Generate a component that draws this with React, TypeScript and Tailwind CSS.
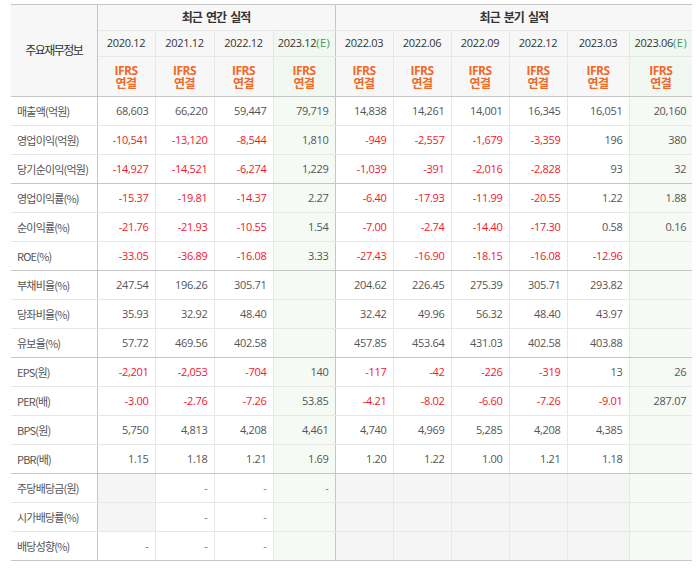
import React from "react";

type Row = { label: string; values: (string | null)[]; groupEnd?: boolean };

const rows: Row[] = [
  { label: "매출액(억원)", values: ["68,603", "66,220", "59,447", "79,719", "14,838", "14,261", "14,001", "16,345", "16,051", "20,160"] },
  { label: "영업이익(억원)", values: ["-10,541", "-13,120", "-8,544", "1,810", "-949", "-2,557", "-1,679", "-3,359", "196", "380"] },
  { label: "당기순이익(억원)", values: ["-14,927", "-14,521", "-6,274", "1,229", "-1,039", "-391", "-2,016", "-2,828", "93", "32"], groupEnd: true },
  { label: "영업이익률(%)", values: ["-15.37", "-19.81", "-14.37", "2.27", "-6.40", "-17.93", "-11.99", "-20.55", "1.22", "1.88"] },
  { label: "순이익률(%)", values: ["-21.76", "-21.93", "-10.55", "1.54", "-7.00", "-2.74", "-14.40", "-17.30", "0.58", "0.16"] },
  { label: "ROE(%)", values: ["-33.05", "-36.89", "-16.08", "3.33", "-27.43", "-16.90", "-18.15", "-16.08", "-12.96", ""], groupEnd: true },
  { label: "부채비율(%)", values: ["247.54", "196.26", "305.71", "", "204.62", "226.45", "275.39", "305.71", "293.82", ""] },
  { label: "당좌비율(%)", values: ["35.93", "32.92", "48.40", "", "32.42", "49.96", "56.32", "48.40", "43.97", ""] },
  { label: "유보율(%)", values: ["57.72", "469.56", "402.58", "", "457.85", "453.64", "431.03", "402.58", "403.88", ""], groupEnd: true },
  { label: "EPS(원)", values: ["-2,201", "-2,053", "-704", "140", "-117", "-42", "-226", "-319", "13", "26"] },
  { label: "PER(배)", values: ["-3.00", "-2.76", "-7.26", "53.85", "-4.21", "-8.02", "-6.60", "-7.26", "-9.01", "287.07"] },
  { label: "BPS(원)", values: ["5,750", "4,813", "4,208", "4,461", "4,740", "4,969", "5,285", "4,208", "4,385", ""] },
  { label: "PBR(배)", values: ["1.15", "1.18", "1.21", "1.69", "1.20", "1.22", "1.00", "1.21", "1.18", ""], groupEnd: true },
  { label: "주당배당금(원)", values: [null, "-", "-", "-", null, null, null, null, null, ""] },
  { label: "시가배당률(%)", values: [null, "-", "-", "", null, null, null, null, null, ""] },
  { label: "배당성향(%)", values: ["-", "-", "-", "", null, null, null, null, null, ""], groupEnd: true },
];

const periods = [
  { p: "2020.12", e: false },
  { p: "2021.12", e: false },
  { p: "2022.12", e: false },
  { p: "2023.12", e: true },
  { p: "2022.03", e: false },
  { p: "2022.06", e: false },
  { p: "2022.09", e: false },
  { p: "2022.12", e: false },
  { p: "2023.03", e: false },
  { p: "2023.06", e: true },
];

const widths = [86, 58, 59, 59, 62, 58, 58, 58, 58, 62, 63];

function rightBorder(i: number) {
  if (i === 3) return "border-r border-r-[#c6c6c6]";
  if (i === 9) return "";
  return "border-r border-r-[#e7e7e7]";
}

export default function App() {
  return (
    <div className="w-[698px] h-[568px] bg-white pt-[4px] pl-[11px]" style={{ fontFamily: '"Open Sans", "Noto Sans CJK KR", sans-serif' }}>
      <table className="table-fixed border-collapse w-[681px] text-[11px]">
        <colgroup>
          {widths.map((w, i) => (
            <col key={i} style={{ width: w }} />
          ))}
        </colgroup>
        <thead>
          <tr className="h-[26px]">
            <th rowSpan={3} className="bg-[#f7f7f7] border-t border-t-[#c6c6c6] border-b border-b-[#c6c6c6] border-r border-r-[#c6c6c6] font-normal text-[#333] text-[12px] tracking-[-1.5px] text-center">
              주요재무정보
            </th>
            <th colSpan={4} className="bg-[#f7f7f7] border-t border-t-[#c6c6c6] border-b border-b-[#e7e7e7] border-r border-r-[#c6c6c6] font-bold text-[#333] text-[12px] tracking-[-1px] [word-spacing:2px] text-center">
              최근 연간 실적
            </th>
            <th colSpan={6} className="bg-[#f7f7f7] border-t border-t-[#c6c6c6] border-b border-b-[#e7e7e7] font-bold text-[#333] text-[12px] tracking-[-1px] [word-spacing:2px] text-center">
              최근 분기 실적
            </th>
          </tr>
          <tr className="h-[26px]">
            {periods.map((c, i) => (
              <th
                key={i}
                className={`${c.e ? "bg-[#f1f7f1]" : "bg-[#f7f7f7]"} border-b border-b-[#e7e7e7] ${rightBorder(i)} font-normal text-[#333] tracking-[-0.3px] text-center whitespace-nowrap`}
              >
                {c.p}
                {c.e && <span className="text-[#3d9a55] tracking-[0.5px]">(E)</span>}
              </th>
            ))}
          </tr>
          <tr className="h-[40px]">
            {periods.map((c, i) => (
              <th
                key={i}
                className={`${c.e ? "bg-[#f1f7f1]" : "bg-[#f7f7f7]"} border-b border-b-[#c6c6c6] ${rightBorder(i)} font-bold text-[#f0692a] text-[12px] leading-[13px] tracking-[-0.5px] text-center whitespace-pre-line`}
              >
                {"IFRS\n연결"}
              </th>
            ))}
          </tr>
        </thead>
        <tbody>
          {rows.map((r, ri) => (
            <tr key={ri} className="h-[29px]">
              <th
                className={`bg-white ${r.groupEnd ? "border-b border-b-[#c6c6c6]" : "border-b border-b-[#e7e7e7]"} border-r border-r-[#c6c6c6] font-normal text-left pl-[6px] text-[#555] text-[11px] tracking-[-0.8px] whitespace-nowrap font-['Noto_Sans_CJK_KR',sans-serif]`}
              >
                {r.label}
              </th>
              {r.values.map((v, i) => {
                const est = i === 3 || i === 9;
                const bg = est ? "bg-[#f5faf5]" : v === null ? "bg-[#f5f5f5]" : "bg-white";
                const neg = v !== null && v.startsWith("-") && v !== "-";
                const color = neg ? "text-[#f2172b]" : v === "-" ? "text-[#777]" : "text-[#555]";
                return (
                  <td
                    key={i}
                    className={`${bg} ${r.groupEnd ? "border-b border-b-[#c6c6c6]" : "border-b border-b-[#e7e7e7]"} ${rightBorder(i)} ${color} text-right pr-[6px] tracking-[-0.3px] whitespace-nowrap`}
                  >
                    {v ?? ""}
                  </td>
                );
              })}
            </tr>
          ))}
        </tbody>
      </table>
    </div>
  );
}
